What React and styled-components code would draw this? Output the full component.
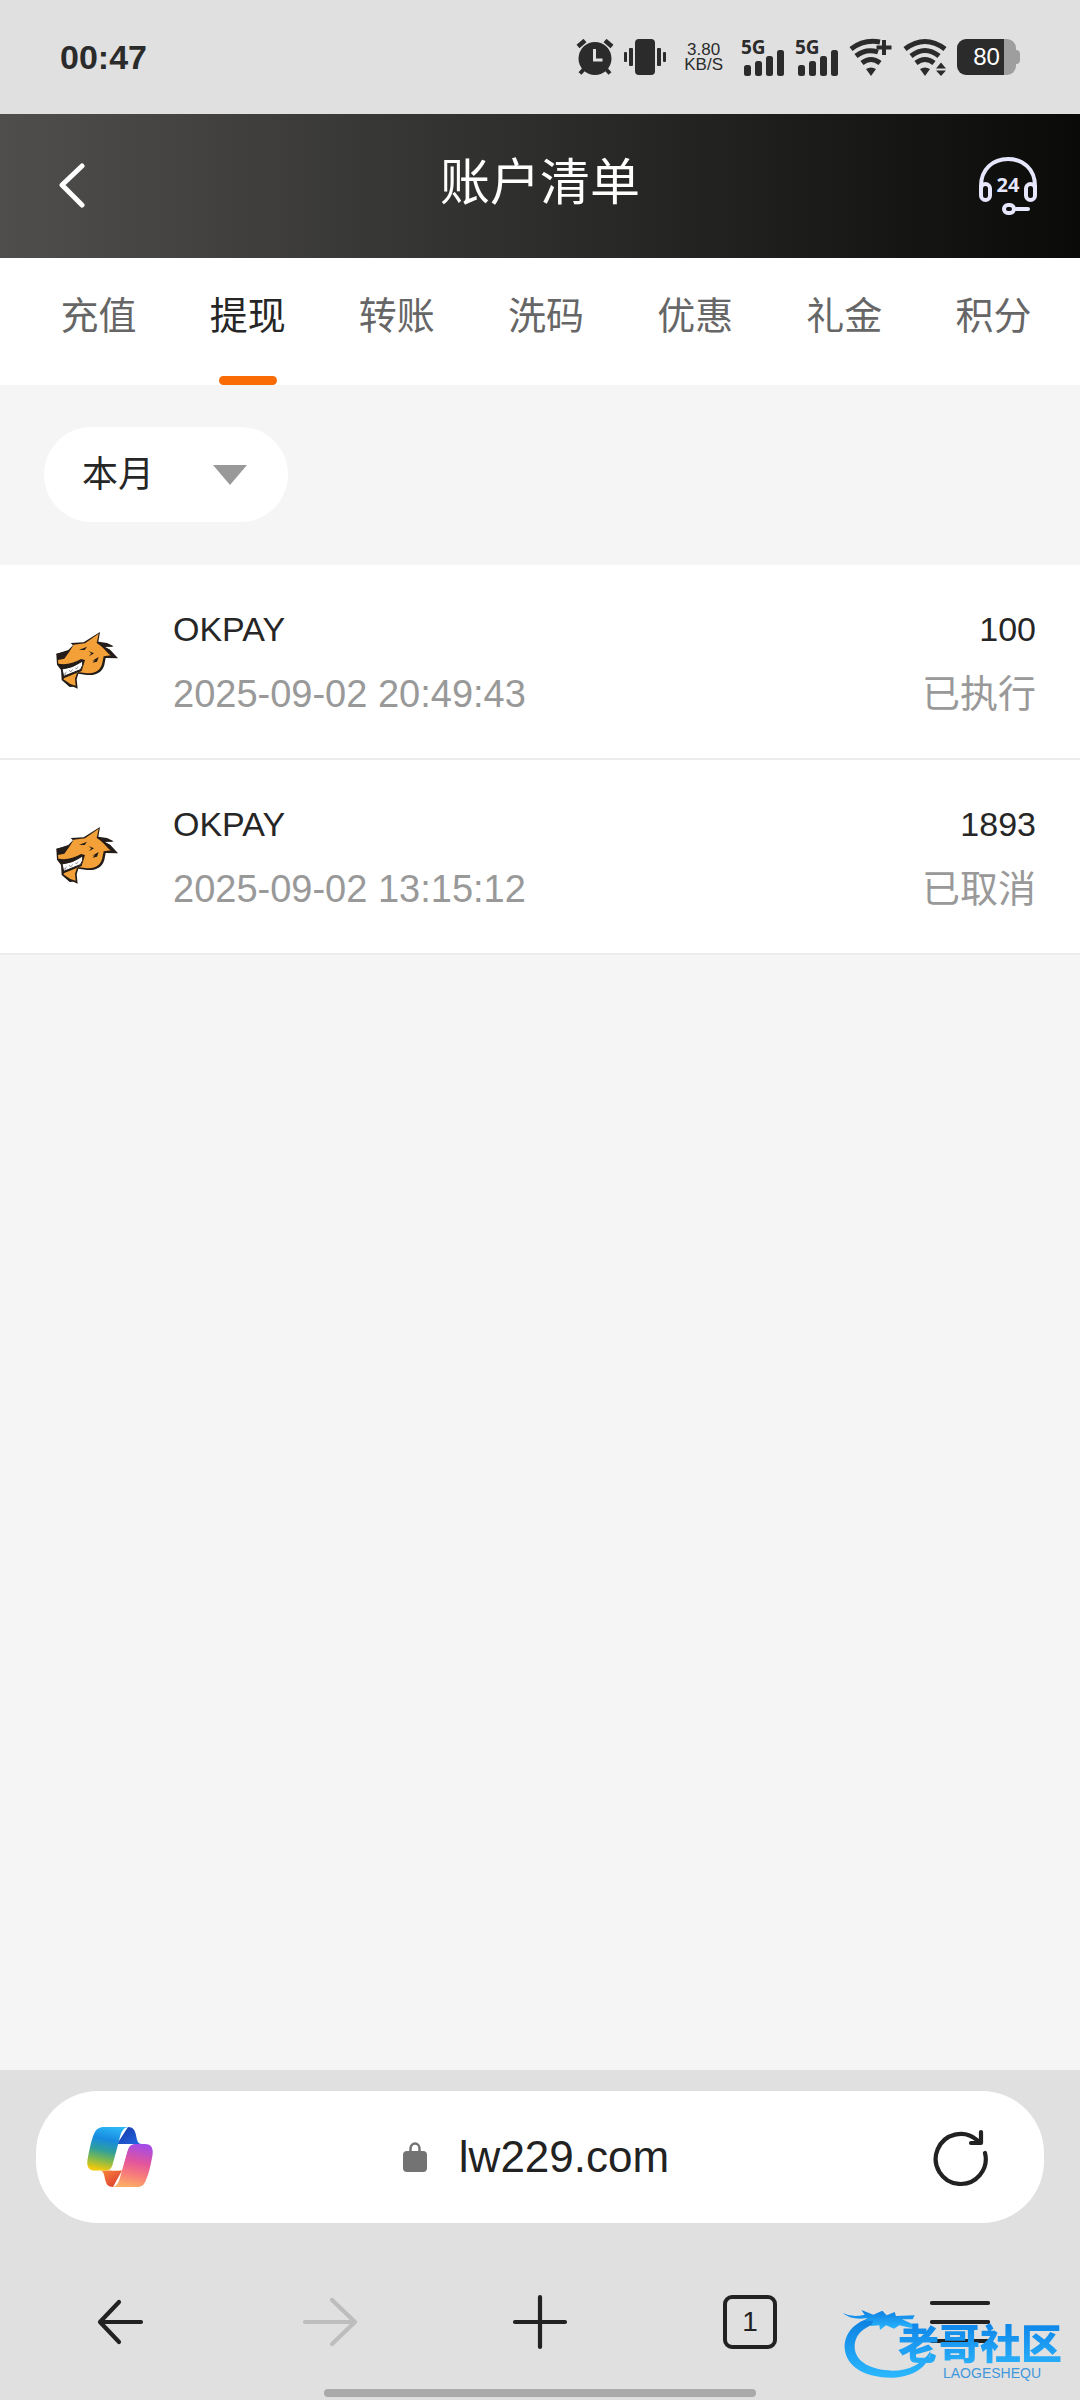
import React from "react";
import styled, { createGlobalStyle } from "styled-components";

const GlobalStyle = createGlobalStyle`
  *, *::before, *::after { box-sizing: border-box; }
  body {
    margin: 0;
    background: #f5f5f5;
    color: #262626;
    font-family: "Liberation Sans", "Noto Sans CJK SC", sans-serif;
  }
  button, select, input { font: inherit; color: inherit; }
  svg { display: block; flex: none; }
`;

const Screen = styled.div`
  position: relative;
  display: flex;
  flex-direction: column;
  min-height: 100vh;
`;

/* ---------- status bar ---------- */

const StatusBar = styled.div`
  display: flex;
  align-items: center;
  justify-content: space-between;
  height: 114px;
  padding: 0 60px;
  background: #e0e0e0;
  color: #2b2b2b;
`;

const Clock = styled.time`
  font-size: 34px;
  font-weight: 700;
  line-height: 36px;
`;

const StatusIcons = styled.div`
  display: flex;
  align-items: center;
  gap: 10px;
`;

const NetSpeed = styled.div`
  margin: 0 8px;
  font-size: 17px;
  line-height: 15px;
  text-align: center;
`;

const Battery = styled.div`
  display: flex;
  align-items: center;
`;

const BatteryBody = styled.div`
  display: flex;
  align-items: center;
  justify-content: center;
  width: 59px;
  height: 36px;
  border-radius: 9px;
  background: linear-gradient(to right, #2b2b2b 80%, #9e9e9e 80%);
  color: #fff;
  font-size: 24px;
  line-height: 36px;
`;

const BatteryTip = styled.div`
  width: 4px;
  height: 14px;
  border-radius: 0 4px 4px 0;
  background: #9e9e9e;
`;

const Signal = styled.div`
  display: flex;
  flex-direction: column;
  width: 44px;
  height: 38px;
  font-family: "Noto Sans", sans-serif;
  font-size: 19px;
  font-weight: 700;
  line-height: 18px;

  svg {
    margin-top: -6px;
  }
`;

/* ---------- page header ---------- */

const Header = styled.header`
  display: flex;
  align-items: center;
  justify-content: space-between;
  height: 144px;
  padding: 0 42px;
  background: linear-gradient(to right, #4f4e4c, #2d2d2b 50%, #0a0a08);
  color: #fff;
`;

const Title = styled.h1`
  margin: 0;
  padding-bottom: 6px;
  font-size: 50px;
  font-weight: 400;
  line-height: 60px;
`;

const IconButton = styled.button`
  display: flex;
  align-items: center;
  justify-content: center;
  width: 60px;
  height: 60px;
  padding: 0;
  border: 0;
  background: none;
  color: ${(p) => p.$color || "inherit"};
`;

/* ---------- tabs ---------- */

const Tabs = styled.nav`
  display: flex;
  height: 127px;
  padding: 0 12px 0 24px;
  background: #fff;
`;

const Tab = styled.button`
  display: flex;
  flex: 1;
  flex-direction: column;
  align-items: center;
  justify-content: space-between;
  padding: 30px 0 0;
  border: 0;
  background: none;
  color: ${(p) => (p.$active ? "#262626" : "#666")};
  font-size: 38px;
  line-height: 56px;

  &::after {
    content: "";
    width: 58px;
    height: 9px;
    border-radius: 5px;
    background: ${(p) => (p.$active ? "#fa6b05" : "transparent")};
  }
`;

/* ---------- filter and list ---------- */

const Filter = styled.div`
  display: flex;
  padding: 42px 44px;
  height: 180px;
`;

const SelectBox = styled.label`
  position: relative;
  display: flex;
  align-items: center;
  width: 244px;
  height: 95px;
  border-radius: 48px;
  background: #fff;

  svg {
    position: absolute;
    right: 41px;
    pointer-events: none;
  }
`;

const Select = styled.select`
  width: 100%;
  height: 100%;
  padding: 0 38px;
  border: 0;
  border-radius: 48px;
  background: none;
  appearance: none;
  font-size: 36px;
`;

const Records = styled.ul`
  flex: 1;
  margin: 0;
  padding: 0;
  list-style: none;
`;

const Row = styled.li`
  display: flex;
  align-items: center;
  height: 195px;
  padding: 0 44px 0 55px;
  border-bottom: 2px solid #ececec;
  background: #fff;
`;

const Info = styled.div`
  display: flex;
  flex: 1;
  flex-direction: column;
  align-items: ${(p) => (p.$end ? "flex-end" : "flex-start")};
  padding-left: ${(p) => (p.$end ? 0 : 54)}px;
`;

const Primary = styled.span`
  font-size: 34px;
  line-height: 65px;
`;

const Secondary = styled.span`
  color: #999;
  font-size: 38px;
  line-height: 65px;
`;

/* ---------- browser bar ---------- */

const BrowserBar = styled.footer`
  display: flex;
  flex-direction: column;
  align-items: center;
  padding: 21px 0 3px;
  background: #e0e0e0;
  color: #222;
`;

const Address = styled.div`
  display: flex;
  align-items: center;
  justify-content: space-between;
  align-self: stretch;
  height: 132px;
  margin: 0 36px;
  padding: 0 54px;
  border-radius: 62px;
  background: #fff;
`;

const Url = styled.a`
  display: flex;
  align-items: center;
  gap: 32px;
  padding-right: 8px;
  color: inherit;
  font-size: 44px;
  line-height: 60px;
  text-decoration: none;
`;

const NavRow = styled.nav`
  display: flex;
  align-self: stretch;
  align-items: center;
  justify-content: space-around;
  height: 134px;
  margin-top: 32px;
  padding: 0 15px;
`;

const TabCount = styled.span`
  display: flex;
  align-items: center;
  justify-content: center;
  width: 54px;
  height: 54px;
  border: 4px solid #222;
  border-radius: 9px;
  font-size: 28px;
`;

const HomeIndicator = styled.div`
  width: 40%;
  height: 8px;
  border-radius: 4px;
  background: #aaa;
`;

/* ---------- community badge over the page ---------- */

const Badge = styled.div`
  position: absolute;
  right: 18px;
  bottom: 20px;
  display: grid;
  grid-template-columns: 56px auto;
  pointer-events: none;
`;

const BadgeDragon = styled.svg`
  grid-area: 1 / 1;
  width: 92px;
  height: 72px;
`;

const BadgeText = styled.div`
  grid-area: 1 / 2;
  display: flex;
  flex-direction: column;
  align-items: center;
  justify-content: flex-end;
  z-index: 1;
`;

const BadgeName = styled.span`
  background: linear-gradient(#0a7fe6, #29b0fa);
  background-clip: text;
  color: transparent;
  font-family: "Noto Sans CJK SC", sans-serif;
  font-size: 41px;
  font-weight: 900;
  line-height: 50px;
`;

const BadgeLatin = styled.span`
  padding-left: 24px;
  color: #3f97dc;
  font-size: 14px;
  line-height: 14px;
`;

/* ---------- icons ---------- */

const AlarmIcon = () => (
  <svg width="38" height="36" viewBox="0 0 38 36" aria-hidden="true">
    <g stroke="#2b2b2b" strokeWidth="4.5">
      <path d="M2 7.5 9 1.500M36 7.500 29 1.500" />
      <path d="m9 29-5 5.500M29 29l5 5.500" strokeWidth="4" />
    </g>
    <circle cx="19" cy="19.500" r="16.500" fill="#2b2b2b" />
    <path d="M18.500 10v11h8" fill="none" stroke="#e0e0e0" strokeWidth="3" />
  </svg>
);

const VibrateIcon = () => (
  <svg width="42" height="36" viewBox="0 0 42 36" fill="#2b2b2b" aria-hidden="true">
    <rect x="11" width="20" height="36" rx="4" />
    <rect x="5" y="9" width="4" height="18" rx="1" />
    <rect x="33" y="9" width="4" height="18" rx="1" />
    <rect y="13" width="3" height="10" rx="1" />
    <rect x="39" y="13" width="3" height="10" rx="1" />
  </svg>
);

const SignalIcon = () => (
  <Signal>
    <span>5G</span>
    <svg width="44" height="26" viewBox="0 0 44 26" fill="#2b2b2b" aria-hidden="true">
      <rect x="3" y="15" width="7" height="11" rx="2.500" />
      <rect x="14" y="11" width="7" height="15" rx="2.500" />
      <rect x="25" y="6" width="7" height="20" rx="2.500" />
      <rect x="36" width="7" height="26" rx="2.500" />
    </svg>
  </Signal>
);

const WifiIcon = ({ plus }) => (
  <svg width="44" height="38" viewBox="0 0 44 38" aria-hidden="true">
    <g fill="none" stroke="#2b2b2b" strokeWidth="5">
      <path d={plus ? "M2 11Q15 1 31 4" : "M2 11Q22-4 42 11"} />
      <path d={plus ? "M7 18Q17 10 29 14" : "M8 18Q22 7 36 18"} />
      <path d="M13 25Q22 18 31 25" />
      {plus && <path d="M35 2v15M27.500 9.500h15" strokeWidth="4" />}
    </g>
    <path d="M17 31Q22 28 27 31L22 38Z" fill="#2b2b2b" />
    {!plus && <path d="M33 30.500 38 24.500l5 6ZM33 32.500 38 38l5-5.500Z" fill="#2b2b2b" />}
  </svg>
);

const ChevronIcon = () => (
  <svg width="28" height="46" viewBox="0 0 28 46" fill="none" stroke="#fff" strokeWidth="5" strokeLinecap="round" strokeLinejoin="round" aria-hidden="true">
    <path d="M24 3 4 22l20 20" />
  </svg>
);

const HeadsetIcon = () => (
  <svg width="58" height="58" viewBox="0 0 58 58" fill="none" stroke="#e6e6fc" strokeWidth="4" strokeLinecap="round" aria-hidden="true">
    <path d="M2 33v-4C2 12 14 2 29 2s27 10 27 27v4" />
    <rect x="2" y="27" width="9" height="16" rx="4.500" />
    <rect x="47" y="27" width="9" height="16" rx="4.500" />
    <rect x="25" y="48" width="10" height="8" rx="4" />
    <path d="M37 52h12" />
    <text x="29" y="35" fill="#e6e6fc" stroke="none" textAnchor="middle" fontFamily="Noto Sans, sans-serif" fontSize="20" fontWeight="700">24</text>
  </svg>
);

const WolfLogo = () => (
  <svg width="64" height="60" viewBox="44 64 192 180" aria-hidden="true">
    <path d="M91 97 130 95 179 64 174 93 200 97 220 107 192 108 209 117 233 143 196 142 192 163C184 190 162 194 140 193L114 189 109 206 112 234 99 228 88 229 64 208 62 178 50 162 48 130 84 118 98 104Z" fill="#231c18" />
    <path d="M100 102 134 98 175 69 169 97Q190 110 212 134L190 137 185 161C178 184 158 188 140 188L111 184 104 204 106 225 90 220 69 206 72 202 124 181 134 148 122 145Q88 165 54 159L53 148 72 144 88 122Z" fill="#f2a037" />
    <path d="M65 175Q98 172 127 151 130 165 120 177L70 197Z" fill="#fff" stroke="#231c18" strokeWidth="3" />
    <path d="m69 186 5 6 4-9m8-5 5 6 6-8m8-5 3 4 5-7" fill="none" stroke="#667" strokeWidth="2" />
    <path d="m48 129 35-9-10 16-20 6ZM116 118l24-10-7 10ZM144 121l17 7-15 9 7-9ZM156 150l19-11-5 14-14 3 8-7ZM176 96l28 5 15 7-27 0 16 9 24 26-26-12-18-20Z" fill="#231c18" />
  </svg>
);

const CopilotLogo = () => (
  <svg width="66" height="60" viewBox="0 0 66 60" aria-hidden="true">
    <defs>
      <linearGradient id="cpLeft" x1="0.600" y1="0" x2="0.400" y2="1">
        <stop offset="0" stopColor="#2bb5f5" />
        <stop offset="0.300" stopColor="#178ae0" />
        <stop offset="0.550" stopColor="#2f9f9d" />
        <stop offset="0.750" stopColor="#76b854" />
        <stop offset="1" stopColor="#f2c80c" />
      </linearGradient>
      <linearGradient id="cpTop" x1="0" y1="0" x2="1" y2="1">
        <stop offset="0" stopColor="#1737a5" />
        <stop offset="1" stopColor="#2368e4" />
      </linearGradient>
      <linearGradient id="cpRight" x1="0.600" y1="0" x2="0.400" y2="1">
        <stop offset="0" stopColor="#a54be6" />
        <stop offset="0.400" stopColor="#e2559c" />
        <stop offset="0.700" stopColor="#f77c7b" />
        <stop offset="1" stopColor="#fcae65" />
      </linearGradient>
      <linearGradient id="cpBottom" x1="0" y1="0" x2="1" y2="1">
        <stop offset="0" stopColor="#fb8b3c" />
        <stop offset="1" stopColor="#d8332f" />
      </linearGradient>
    </defs>
    <path d="M41 0c5 0 7 3 8 8 1 6 2 9 6 9H30Z" fill="url(#cpTop)" />
    <path d="M12 43.500h23L26 60c-5 0-7-3-8-8-1-6-2-8.500-6-8.500Z" fill="url(#cpBottom)" />
    <path d="M17 0h25c-6 0-8 5-10 14l-6 22c-1 5-3 7.500-8 7.500H8C1 43.500-1 39 1 30 3 20 4 14 7 7c2-5 5-7 10-7Z" fill="url(#cpLeft)" />
    <path d="M49 17h9c7 0 9 5 7 14-2 10-3 15-6 22-2 5-4 7-9 7H25c5 0 7-5 9-13l6-22c2-6 4-8 9-8Z" fill="url(#cpRight)" />
    <path d="M41 17C37 17 35 19 34 23L29 38C28 41 27 43.500 23 43.500H31C34 43.500 35 42 36 39L41 22C42 18 43 17 46 17Z" fill="#fff" />
  </svg>
);

const LockIcon = () => (
  <svg width="24" height="30" viewBox="0 0 24 30" aria-hidden="true">
    <rect y="9" width="24" height="21" rx="4" fill="#737373" />
    <path d="M7.500 11V6.500a4.500 5 0 0 1 9 0V11" fill="none" stroke="#737373" strokeWidth="2.500" />
  </svg>
);

const LineIcon = ({ d }) => (
  <svg width="60" height="60" viewBox="0 0 60 60" fill="none" stroke="currentColor" strokeWidth="4.200" strokeLinecap="round" strokeLinejoin="round" aria-hidden="true">
    <path d={d} />
  </svg>
);

const TABS = ["充值", "提现", "转账", "洗码", "优惠", "礼金", "积分"];

const RECORDS = [
  { name: "OKPAY", time: "2025-09-02 20:49:43", amount: "100", state: "已执行" },
  { name: "OKPAY", time: "2025-09-02 13:15:12", amount: "1893", state: "已取消" },
];

export default function App() {
  return (
    <Screen>
      <GlobalStyle />
      <StatusBar>
        <Clock>00:47</Clock>
        <StatusIcons>
          <AlarmIcon />
          <VibrateIcon />
          <NetSpeed>
            <div>3.80</div>
            <div>KB/S</div>
          </NetSpeed>
          <SignalIcon />
          <SignalIcon />
          <WifiIcon plus />
          <WifiIcon />
          <Battery>
            <BatteryBody>80</BatteryBody>
            <BatteryTip />
          </Battery>
        </StatusIcons>
      </StatusBar>

      <Header>
        <IconButton aria-label="返回"><ChevronIcon /></IconButton>
        <Title>账户清单</Title>
        <IconButton aria-label="客服"><HeadsetIcon /></IconButton>
      </Header>

      <Tabs>
        {TABS.map((t) => (
          <Tab key={t} type="button" $active={t === "提现"}>{t}</Tab>
        ))}
      </Tabs>

      <Filter>
        <SelectBox>
          <Select aria-label="时间" defaultValue="本月">
            <option>本月</option>
          </Select>
          <svg width="34" height="20" viewBox="0 0 34 20" aria-hidden="true">
            <path d="M0 0h34L17 20Z" fill="#999" />
          </svg>
        </SelectBox>
      </Filter>

      <Records>
        {RECORDS.map((r) => (
          <Row key={r.time}>
            <WolfLogo />
            <Info>
              <Primary>{r.name}</Primary>
              <Secondary as="time">{r.time}</Secondary>
            </Info>
            <Info $end>
              <Primary>{r.amount}</Primary>
              <Secondary>{r.state}</Secondary>
            </Info>
          </Row>
        ))}
      </Records>

      <BrowserBar>
        <Address>
          <IconButton aria-label="Copilot"><CopilotLogo /></IconButton>
          <Url href="#"><LockIcon />lw229.com</Url>
          <IconButton aria-label="刷新">
            <LineIcon d="M55 26A25 25 0 1 1 47 13M51 5V16H41" />
          </IconButton>
        </Address>
        <NavRow>
          <IconButton aria-label="后退"><LineIcon d="M29 10 10 30l19 20M10 30H51" /></IconButton>
          <IconButton aria-label="前进" $color="#bdbdbd"><LineIcon d="M32 8 55 30 32 52M55 30H5" /></IconButton>
          <IconButton aria-label="新标签页"><LineIcon d="M30 5V55M5 30H55" /></IconButton>
          <IconButton aria-label="标签页"><TabCount>1</TabCount></IconButton>
          <IconButton aria-label="菜单"><LineIcon d="M2 11H58M2 30H58M2 49H58" /></IconButton>
        </NavRow>
        <HomeIndicator />
      </BrowserBar>

      <Badge>
        <BadgeDragon viewBox="64 70 276 216" aria-hidden="true">
          <defs>
            <linearGradient id="dragon" x1="0" y1="0" x2="0" y2="1">
              <stop offset="0" stopColor="#0c7fe0" />
              <stop offset="1" stopColor="#2bb8ff" />
            </linearGradient>
          </defs>
          <g fill="url(#dragon)">
            <path d="M160 98C100 108 70 150 72 190 76 250 140 280 215 279 280 276 325 245 330 198 305 238 265 258 215 258 150 256 104 232 102 188 102 150 130 124 176 116Z" />
            <path d="M66 85Q95 100 132 90L122 76 158 90 185 78 198 92 222 82 226 94 282 92 276 104 244 104 280 120 272 130 236 122 220 132 196 122 178 136 176 122 150 124 158 108 130 108 140 100Q92 108 66 85Z" />
          </g>
        </BadgeDragon>
        <BadgeText>
          <BadgeName>老哥社区</BadgeName>
          <BadgeLatin>LAOGESHEQU</BadgeLatin>
        </BadgeText>
      </Badge>
    </Screen>
  );
}
